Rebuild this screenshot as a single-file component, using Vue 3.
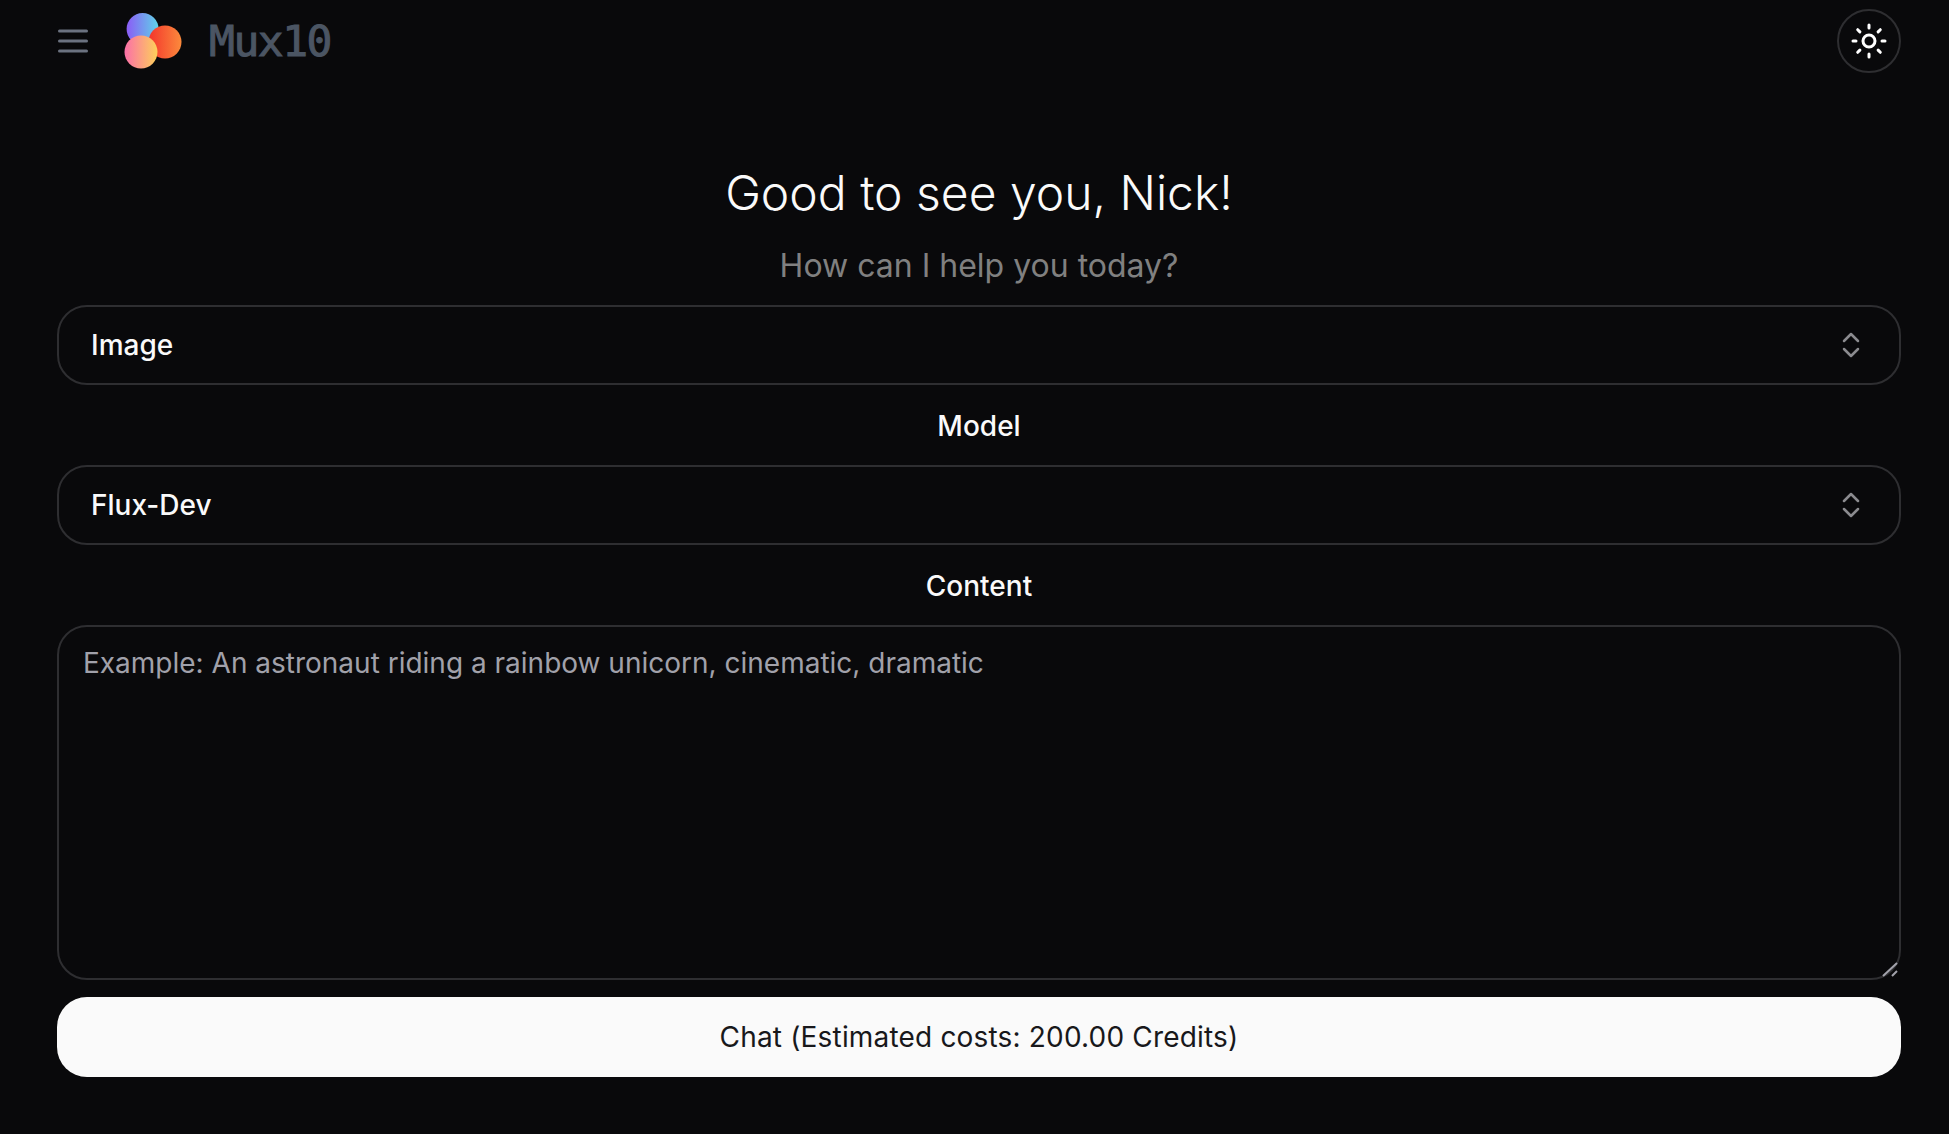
<template>
  <div class="page">
    <header class="topbar">
      <div class="brand">
        <button class="menu-btn" aria-label="Menu">
          <svg width="32" height="32" viewBox="0 0 32 32" fill="none" stroke="#6b7280" stroke-width="3" stroke-linecap="round">
            <path d="M2.500 6h27M2.500 16h27M2.500 26h27" />
          </svg>
        </button>
        <svg class="logo" width="60" height="56" viewBox="0 0 60 56">
          <defs>
            <linearGradient id="g1" x1="0" y1="0" x2="1" y2="0">
              <stop offset="0" stop-color="#8b5cf6" />
              <stop offset="1" stop-color="#5fd4e8" />
            </linearGradient>
            <linearGradient id="g2" x1="0" y1="0" x2="1" y2="0">
              <stop offset="0" stop-color="#f4342c" />
              <stop offset="1" stop-color="#fb8a3c" />
            </linearGradient>
            <linearGradient id="g3" x1="0" y1="0" x2="1" y2="0">
              <stop offset="0" stop-color="#fb6fa8" />
              <stop offset="1" stop-color="#fdd05a" />
            </linearGradient>
          </defs>
          <circle cx="18.600" cy="16" r="16" fill="url(#g1)" />
          <circle cx="41" cy="29" r="16.500" fill="url(#g2)" />
          <circle cx="17" cy="39" r="16.500" fill="url(#g3)" />
        </svg>
        <span class="brand-name">Mux10</span>
      </div>
      <button class="theme-btn" aria-label="Theme">
        <svg width="36" height="36" viewBox="0 0 36 36" fill="none" stroke="#fff" stroke-width="3" stroke-linecap="round">
          <circle cx="18" cy="18" r="6" />
          <path d="M18 2v3M18 31v3M2 18h3M31 18h3M6.700 6.700l2.200 2.200M27.100 27.100l2.200 2.200M6.700 29.300l2.200-2.200M27.100 8.900l2.200-2.200" />
        </svg>
      </button>
    </header>

    <main class="content">
      <h1 class="title">Good to see you, Nick!</h1>
      <p class="subtitle">How can I help you today?</p>

      <div class="select-box">
        <span>Image</span>
        <svg width="24" height="32" viewBox="0 0 24 32" fill="none" stroke="#8b8b8f" stroke-width="2.500" stroke-linecap="round" stroke-linejoin="round">
          <path d="M5 12l7-7 7 7M5 20l7 7 7-7" />
        </svg>
      </div>

      <label class="field-label">Model</label>
      <div class="select-box">
        <span>Flux-Dev</span>
        <svg width="24" height="32" viewBox="0 0 24 32" fill="none" stroke="#8b8b8f" stroke-width="2.500" stroke-linecap="round" stroke-linejoin="round">
          <path d="M5 12l7-7 7 7M5 20l7 7 7-7" />
        </svg>
      </div>

      <label class="field-label">Content</label>
      <div class="prompt-wrap">
        <textarea class="prompt" placeholder="Example: An astronaut riding a rainbow unicorn, cinematic, dramatic"></textarea>
        <svg class="grip" width="20" height="20" viewBox="0 0 20 20" stroke="#a1a1aa" stroke-width="2">
          <path d="M2 16L16 3M11 16l5-5" />
        </svg>
      </div>

      <button class="submit">Chat (Estimated costs: 200.00 Credits)</button>
    </main>
  </div>
</template>

<script setup>
</script>

<style>
html,
body {
  background: #09090b;
}
</style>

<style scoped>
.page {
  height: 1134px;
  box-sizing: border-box;
  padding: 0 48px 0 57px;
  background: #09090b;
  font-family: Inter, sans-serif;
  color: #fafafa;
  overflow: hidden;
}

.topbar {
  height: 82px;
  display: flex;
  align-items: center;
  justify-content: space-between;
}

.brand {
  display: flex;
  align-items: center;
}

.menu-btn {
  background: none;
  border: 0;
  padding: 0;
  width: 32px;
  height: 32px;
  margin-right: 35px;
}

.logo {
  margin-right: 25px;
}

.brand-name {
  font-family: "DejaVu Sans Mono", monospace;
  font-size: 43px;
  color: #4b5563;
  letter-spacing: -1.5px;
  -webkit-text-stroke: 1px #4b5563;
}

.theme-btn {
  width: 64px;
  height: 64px;
  border: 2px solid #2e2e31;
  border-radius: 50%;
  background: none;
  padding: 0;
  display: flex;
  align-items: center;
  justify-content: center;
}

.content {
  display: flex;
  flex-direction: column;
}

.title {
  margin: 81px 0 0;
  text-align: center;
  font-size: 48px;
  font-weight: 300;
  line-height: 60px;
  color: #fafafa;
}

.subtitle {
  margin: 23px 0 19px;
  text-align: center;
  font-size: 32px;
  line-height: 40px;
  font-weight: 400;
  color: #808080;
}

.select-box {
  height: 80px;
  box-sizing: border-box;
  border: 2px solid #2e2e31;
  border-radius: 30px;
  padding: 0 36px 0 32px;
  display: flex;
  align-items: center;
  justify-content: space-between;
  font-size: 28px;
  font-weight: 500;
}

.field-label {
  height: 80px;
  box-sizing: border-box;
  padding-top: 2px;
  display: flex;
  align-items: center;
  justify-content: center;
  font-size: 28px;
  font-weight: 500;
}

.prompt-wrap {
  position: relative;
  height: 355px;
}

.prompt {
  display: block;
  width: 100%;
  height: 100%;
  box-sizing: border-box;
  border: 2px solid #2e2e31;
  border-radius: 30px;
  padding: 16px 24px;
  background: transparent;
  color: #fafafa;
  font-family: inherit;
  font-size: 28px;
  line-height: 40px;
  outline: none;
  resize: none;
}

.prompt::placeholder {
  color: #a1a1aa;
  opacity: 1;
}

.grip {
  position: absolute;
  right: 0;
  bottom: 0;
}

.submit {
  height: 80px;
  margin-top: 17px;
  border: 0;
  border-radius: 30px;
  background: #fafafa;
  color: #18181b;
  font-family: inherit;
  font-size: 28px;
  font-weight: 400;
  letter-spacing: 0.18px;
}
</style>
